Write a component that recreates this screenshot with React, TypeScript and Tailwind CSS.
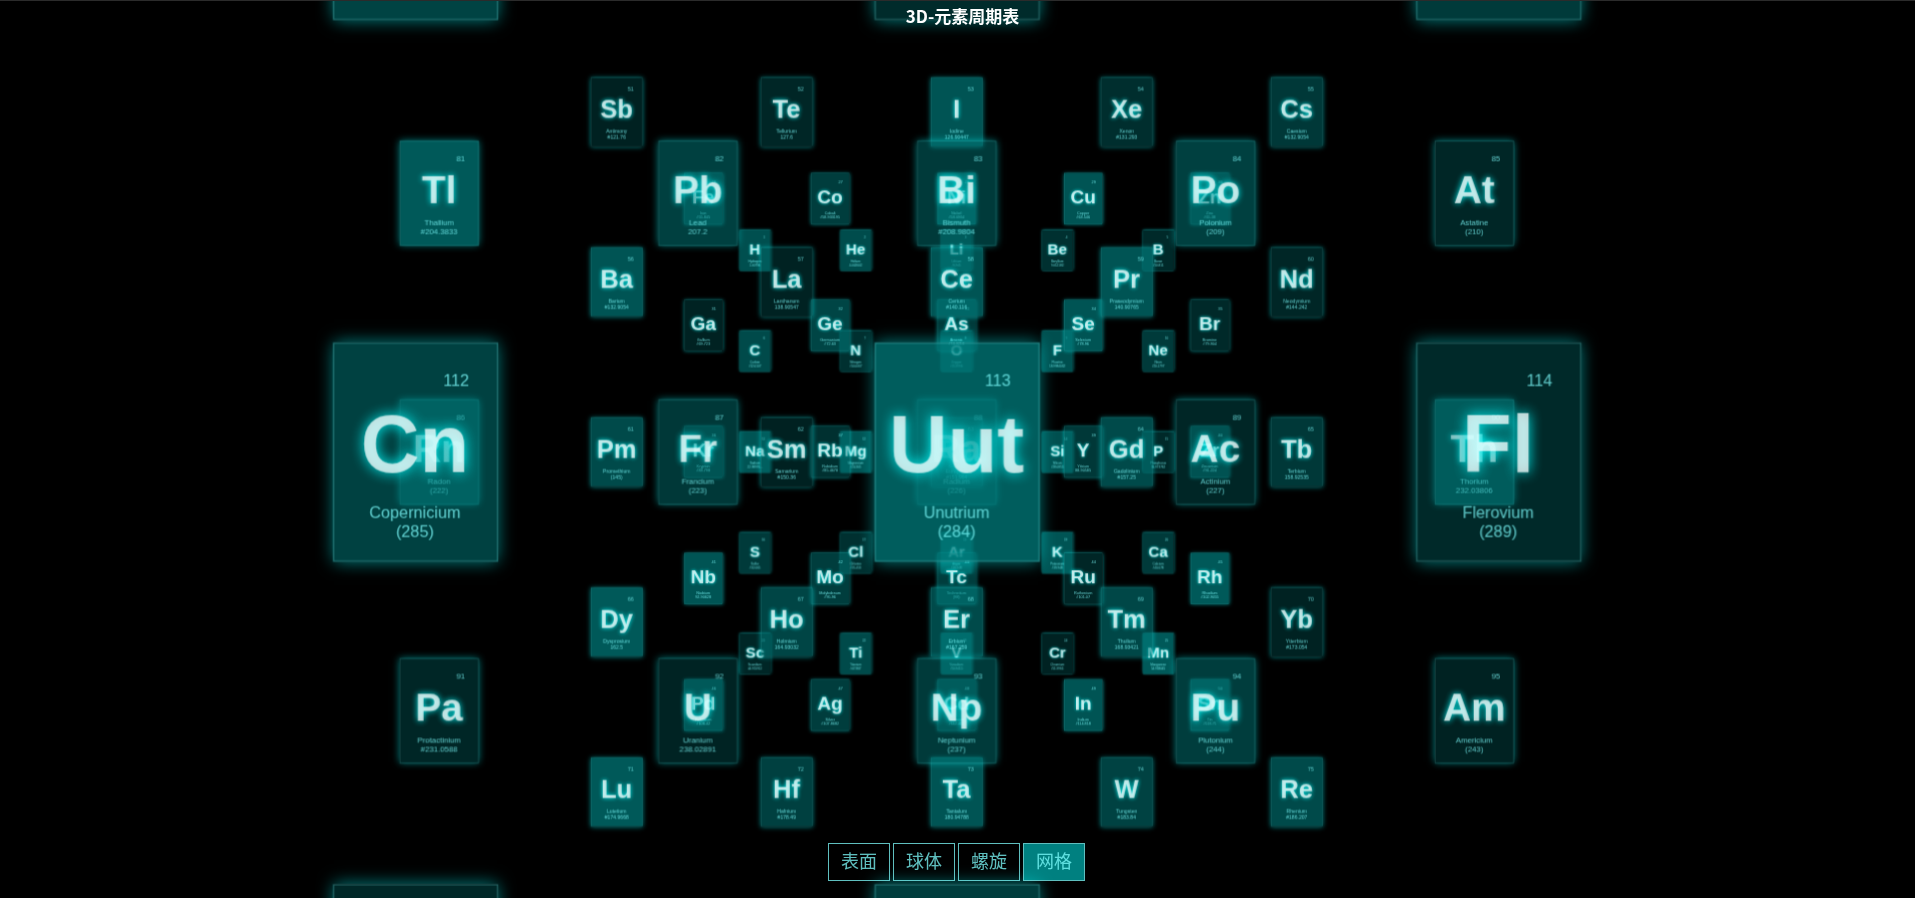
import { useState } from "react";

const ELEMENTS = `H,Hydrogen,1.00794;He,Helium,4.002602;Li,Lithium,#6.941;Be,Beryllium,9.012182;B,Boron,#10.811;
C,Carbon,#12.0107;N,Nitrogen,#14.0067;O,Oxygen,#15.9994;F,Fluorine,18.9984032;Ne,Neon,#20.1797;
Na,Sodium,22.98976...;Mg,Magnesium,#24.305;Al,Aluminium,26.9815386;Si,Silicon,#28.0855;P,Phosphorus,30.973762;
S,Sulfur,#32.065;Cl,Chlorine,#35.453;Ar,Argon,#39.948;K,Potassium,#39.948;Ca,Calcium,#40.078;
Sc,Scandium,44.955912;Ti,Titanium,#47.867;V,Vanadium,#50.9415;Cr,Chromium,#51.9961;Mn,Manganese,54.938045;
Fe,Iron,#55.845;Co,Cobalt,#58.933195;Ni,Nickel,#58.6934;Cu,Copper,#63.546;Zn,Zinc,#65.38;
Ga,Gallium,#69.723;Ge,Germanium,#72.63;As,Arsenic,#74.9216;Se,Selenium,#78.96;Br,Bromine,#79.904;
Kr,Krypton,#83.798;Rb,Rubidium,#85.4678;Sr,Strontium,#87.62;Y,Yttrium,88.90585;Zr,Zirconium,#91.224;
Nb,Niobium,92.90628;Mo,Molybdenum,#95.96;Tc,Technetium,(98);Ru,Ruthenium,#101.07;Rh,Rhodium,#102.9055;
Pd,Palladium,#106.42;Ag,Silver,#107.8682;Cd,Cadmium,#112.411;In,Indium,#114.818;Sn,Tin,#118.71;
Sb,Antimony,#121.76;Te,Tellurium,127.6;I,Iodine,126.90447;Xe,Xenon,#131.293;Cs,Caesium,#132.9054;
Ba,Barium,#132.9054;La,Lanthanum,138.90547;Ce,Cerium,#140.116;Pr,Praseodymium,140.90765;Nd,Neodymium,#144.242;
Pm,Promethium,(145);Sm,Samarium,#150.36;Eu,Europium,#151.964;Gd,Gadolinium,#157.25;Tb,Terbium,158.92535;
Dy,Dysprosium,162.5;Ho,Holmium,164.93032;Er,Erbium,#167.259;Tm,Thulium,168.93421;Yb,Ytterbium,#173.054;
Lu,Lutetium,#174.9668;Hf,Hafnium,#178.49;Ta,Tantalum,180.94788;W,Tungsten,#183.84;Re,Rhenium,#186.207;
Os,Osmium,#190.23;Ir,Iridium,#192.217;Pt,Platinum,#195.084;Au,Gold,196.966569;Hg,Mercury,#200.59;
Tl,Thallium,#204.3833;Pb,Lead,207.2;Bi,Bismuth,#208.9804;Po,Polonium,(209);At,Astatine,(210);
Rn,Radon,(222);Fr,Francium,(223);Ra,Radium,(226);Ac,Actinium,(227);Th,Thorium,232.03806;
Pa,Protactinium,#231.0588;U,Uranium,238.02891;Np,Neptunium,(237);Pu,Plutonium,(244);Am,Americium,(243);
Cm,Curium,(247);Bk,Berkelium,(247);Cf,Californium,(251);Es,Einstenium,(252);Fm,Fermium,(257);
Md,Mendelevium,(258);No,Nobelium,(259);Lr,Lawrencium,(262);Rf,Rutherfordium,(267);Db,Dubnium,(268);
Sg,Seaborgium,(271);Bh,Bohrium,(272);Hs,Hassium,(270);Mt,Meitnerium,(276);Ds,Darmstadium,(281);
Rg,Roentgenium,(280);Cn,Copernicium,(285);Uut,Unutrium,(284);Fl,Flerovium,(289);Uup,Ununpentium,(288);
Lv,Livermorium,(293);Uus,Ununseptium,(294);Uuo,Ununoctium,(294)`
  .split(";")
  .map((entry) => entry.trim().split(","));

// Card opacity in percent, one value per element in atomic order.
const OPACITY = [
  62, 60, 50, 38, 32, 58, 38, 50, 62, 46, 66, 66, 50, 62, 32, 46, 38, 62, 66, 46, 30, 58, 66, 27, 70,
  46, 48, 70, 66, 46, 27, 54, 46, 66, 32, 40, 38, 50, 44, 50, 66, 48, 48, 30, 70, 60, 48, 50, 66, 60,
  26, 30, 66, 36, 44, 66, 27, 66, 66, 30, 58, 26, 50, 58, 44, 70, 54, 58, 56, 27, 70, 50, 66, 52, 58,
  50, 50, 50, 50, 50, 70, 50, 46, 50, 30, 54, 44, 40, 30, 60, 30, 28, 46, 48, 27, 50, 50, 50, 50, 50,
  50, 50, 50, 50, 50, 50, 53, 34, 46, 50, 50, 51, 73, 32, 50, 50, 31, 48,
];

const COLUMNS = 5;
const LAYER_SIZE = 25;
const SPACING = 400;

function gridTransform(index: number) {
  const x = ((index % COLUMNS) - 2) * SPACING;
  const y = ((Math.floor(index / COLUMNS) % COLUMNS) - 2) * SPACING;
  const z = Math.floor(index / LAYER_SIZE) * 1000 - 3676;
  return `translate(-50%, -50%) translate3d(${x}px, ${y}px, ${z}px)`;
}

function ElementCard({ index }: { index: number }) {
  const [symbol, name, weight] = ELEMENTS[index];
  return (
    <article
      className="absolute left-1/2 top-1/2 box-content flex h-[160px] w-[120px] cursor-default flex-col border border-[rgba(127,255,255,0.25)] text-center shadow-[0_0_12px_rgba(0,255,255,0.5)]"
      style={{
        transform: gridTransform(index),
        backgroundColor: `rgba(0, 127, 127, ${OPACITY[index] / 100})`,
      }}
    >
      <div className="pr-5 pt-5 text-right text-[12px] leading-[14px] text-[rgba(127,255,255,0.75)]">
        {index + 1}
      </div>
      <div className="mt-[6px] text-[60px] font-bold leading-[69px] text-[rgba(255,255,255,0.75)] [text-shadow:0_0_10px_rgba(0,255,255,0.95)]">
        {symbol}
      </div>
      <div className="mt-auto whitespace-nowrap pb-[14px] text-[12px] leading-[14px] text-[rgba(127,255,255,0.75)]">
        {name}
        <br />
        {weight}
      </div>
    </article>
  );
}

const VIEWS = ["表面", "球体", "螺旋", "网格"];

export default function App() {
  const [view, setView] = useState("网格");
  return (
    <div className="relative flex h-screen flex-col items-center justify-between overflow-hidden border-t border-[#2b2b2b] bg-black pr-[2px] font-['Liberation_Sans','Noto_Sans_CJK_SC',sans-serif]">
      <main className="absolute -bottom-[5px] left-0 right-[2px] top-0 [perspective:1239px]">
        <div className="h-full w-full [transform-style:preserve-3d]">
          {ELEMENTS.map((element, index) => (
            <ElementCard key={element[0]} index={index} />
          ))}
        </div>
      </main>
      <h1 className="relative pl-3 pt-[3px] font-['Noto_Sans_CJK_SC',sans-serif] text-[17px] font-bold leading-6 text-white">
        3D-元素周期表
      </h1>
      <nav className="relative flex gap-[5px] pb-[18px]">
        {VIEWS.map((label) => (
          <button
            key={label}
            type="button"
            aria-pressed={view === label}
            onClick={() => setView(label)}
            className={`h-9 px-3 text-[18px] leading-6 text-[rgba(127,255,255,0.75)] outline outline-1 outline-[rgba(127,255,255,0.75)] ${
              view === label ? "bg-[rgba(0,255,255,0.5)]" : "bg-transparent"
            }`}
          >
            {label}
          </button>
        ))}
      </nav>
    </div>
  );
}
